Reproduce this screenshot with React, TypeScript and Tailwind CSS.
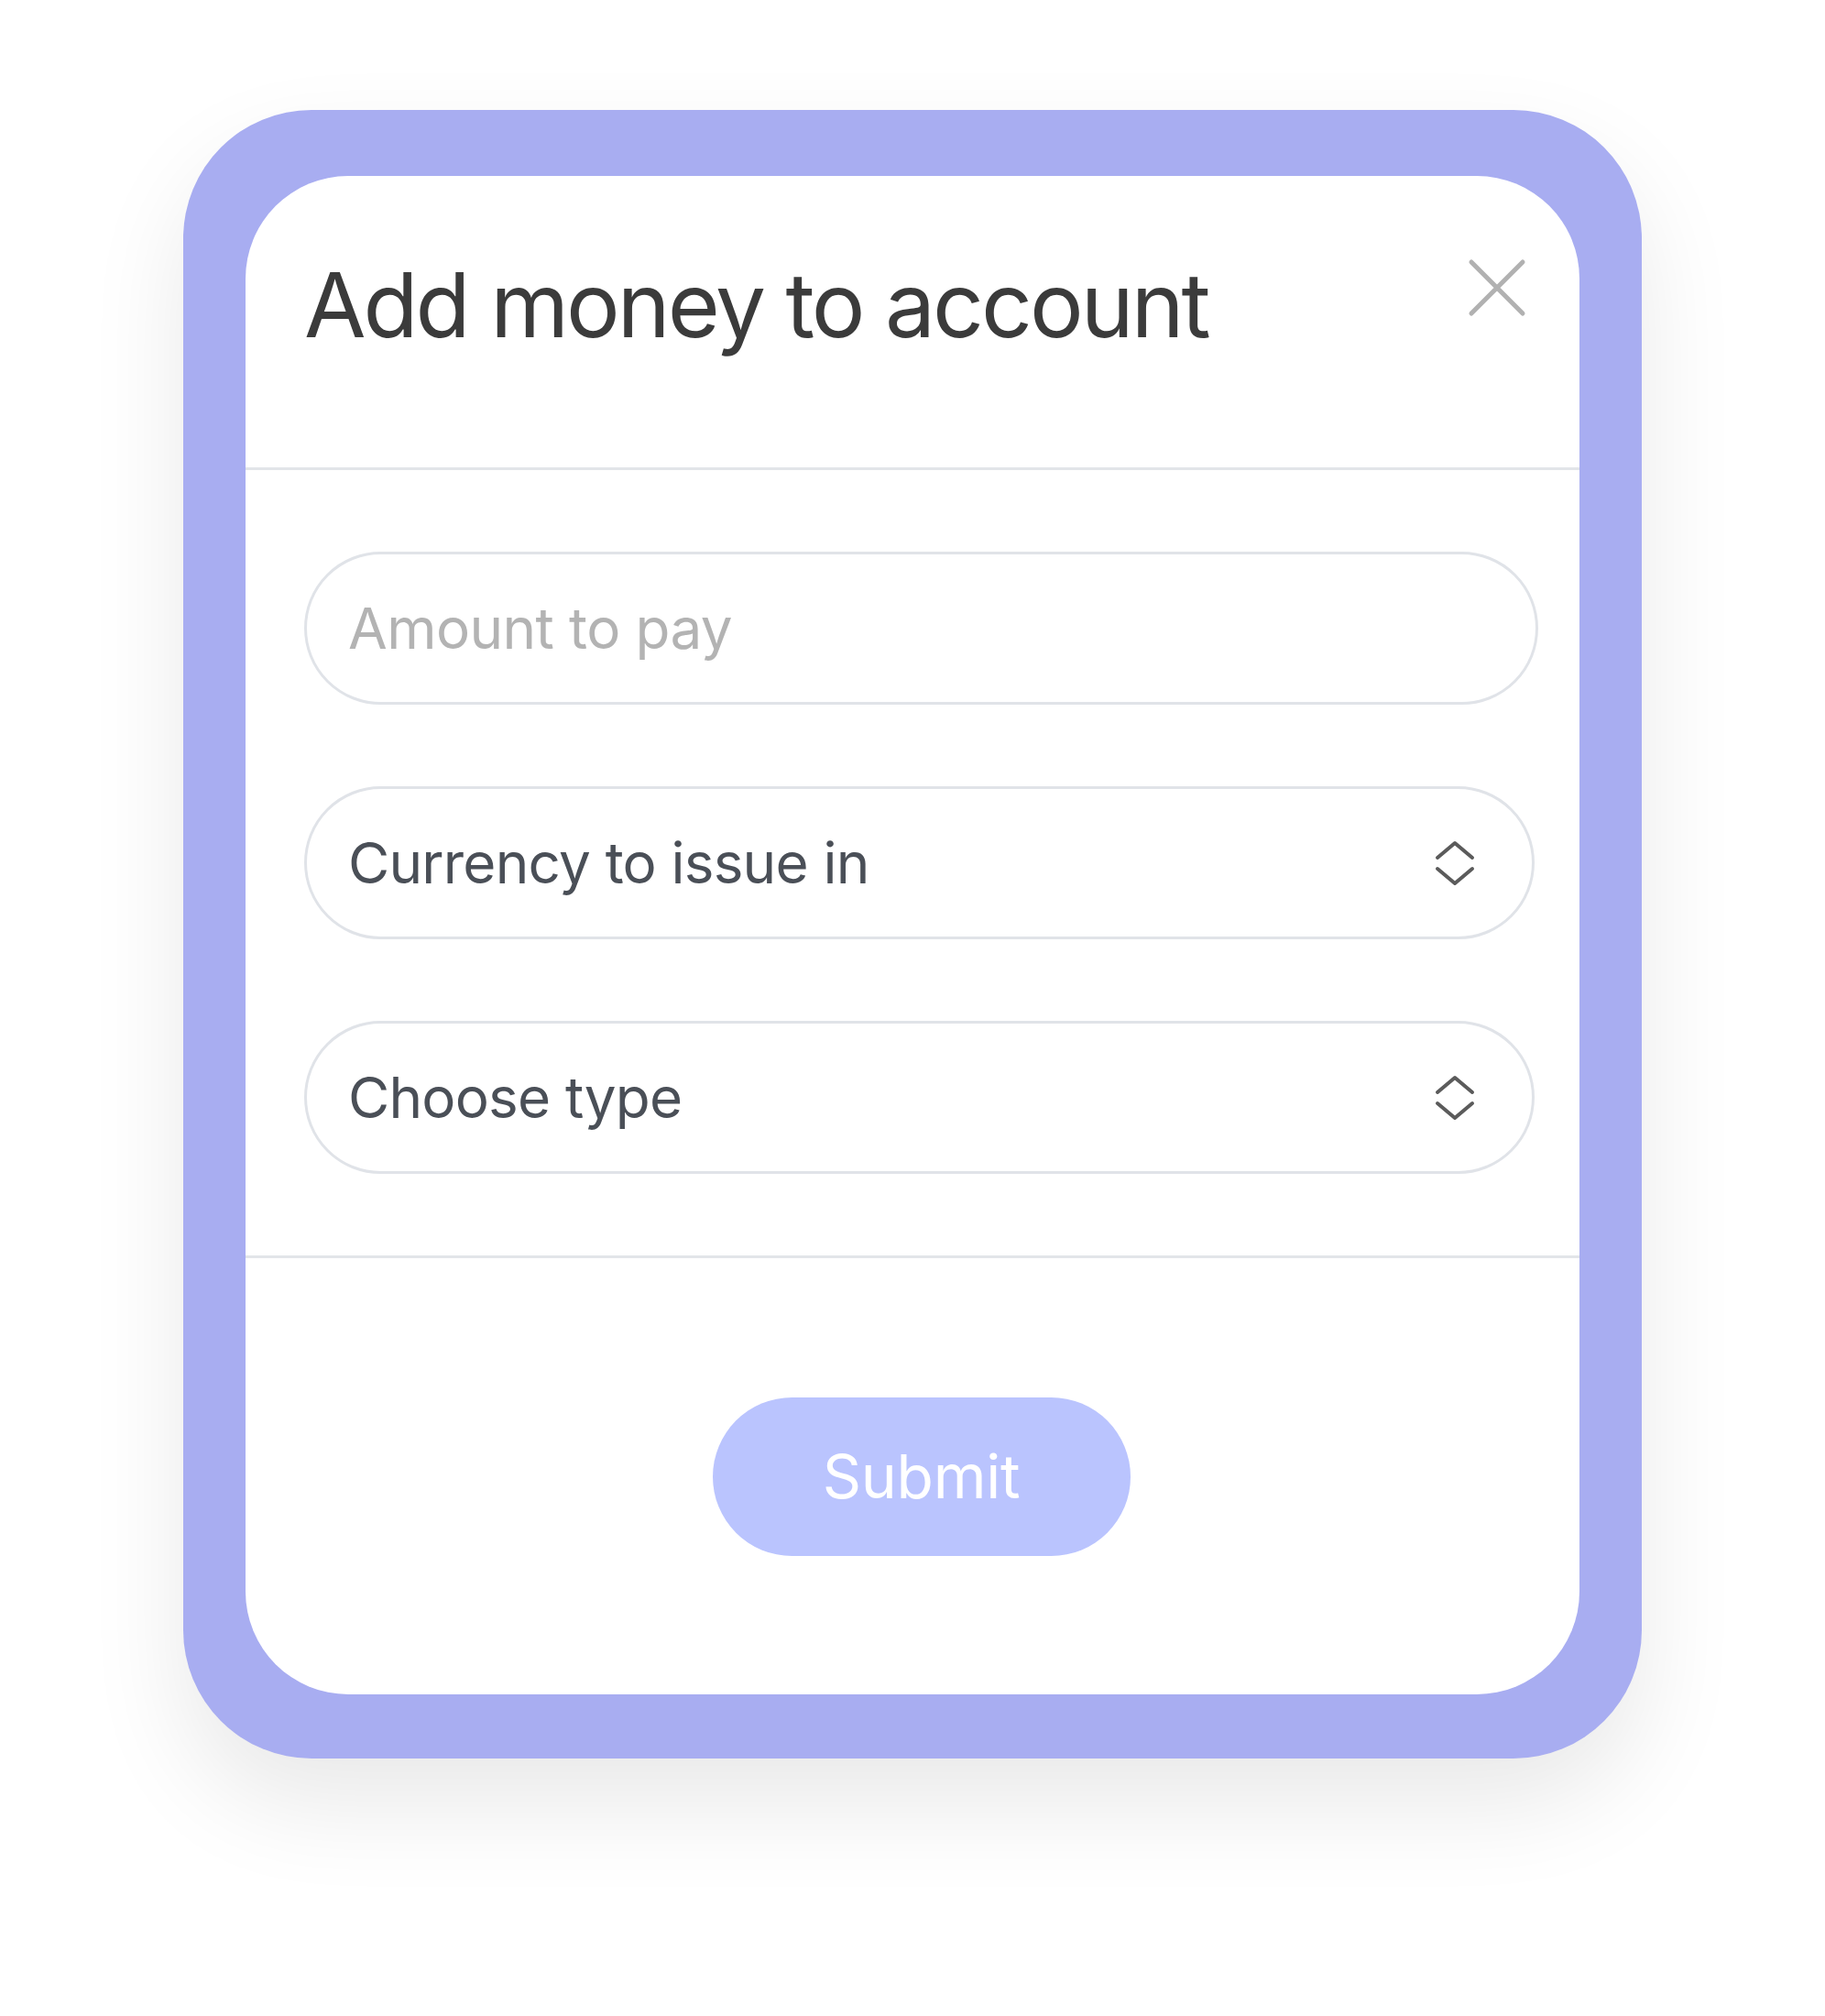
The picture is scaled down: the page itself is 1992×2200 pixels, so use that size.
import React from 'react';

const font = { fontFamily: 'Inter, "Noto Sans", sans-serif' };

const CloseIcon = () => (
  <svg width="64" height="64" viewBox="0 0 64 64" fill="none">
    <path d="M4 4L60 60M60 4L4 60" stroke="#b1b1b1" strokeWidth="5" strokeLinecap="round" />
  </svg>
);

const UpDownIcon = () => (
  <svg width="46" height="50" viewBox="0 0 46 50" fill="none">
    <path d="M4 19L23 3L42 19" stroke="#5b5b5b" strokeWidth="4" strokeLinecap="round" strokeLinejoin="round" />
    <path d="M4 31L23 47L42 31" stroke="#5b5b5b" strokeWidth="4" strokeLinecap="round" strokeLinejoin="round" />
  </svg>
);

const SelectField = ({ label }: { label: string }) => (
  <div className="flex h-[167px] w-[1343px] items-center justify-between rounded-full border-[3px] border-[#e0e3e8] pl-[45px] pr-[61px]">
    <span className="text-[62px] tracking-[-0.8px] text-[#4a4f57]">{label}</span>
    <UpDownIcon />
  </div>
);

export default function App() {
  return (
    <div className="min-h-[2200px] w-[1992px] bg-white pl-[200px] pt-[120px]" style={font}>
      <div className="w-[1592px] rounded-[140px] bg-[#a8adf1] px-[68px] pb-[70px] pt-[72px] shadow-[0_50px_110px_rgba(0,0,0,0.09)]">
        <div className="flex h-[1657px] flex-col rounded-[112px] bg-white">
          {/* header */}
          <div className="flex h-[318px] items-start justify-between pl-[64px] pr-[58px]">
            <h1 className="mt-[82px] text-[98px] leading-[118px] tracking-[-3px] text-[#3b3b3b]">Add money to account</h1>
            <div className="mt-[90px]">
              <CloseIcon />
            </div>
          </div>
          <div className="h-[3px] bg-[#e2e5e9]" />

          {/* fields */}
          <div className="flex flex-col gap-[89px] pl-[64px] pr-[45px] py-[89px]">
            <div className="flex h-[167px] items-center rounded-full border-[3px] border-[#e0e3e8] pl-[45px]">
              <span className="text-[62px] tracking-[-0.6px] text-[#b3b3b3]">Amount to pay</span>
            </div>
            <SelectField label="Currency to issue in" />
            <SelectField label="Choose type" />
          </div>
          <div className="h-[3px] bg-[#e2e5e9]" />

          {/* footer */}
          <div className="flex flex-1 items-center justify-center pl-[64px] pr-[45px]">
            <button className="flex h-[173px] w-[456px] items-center justify-center rounded-full bg-[#bac4fe] text-[66px] tracking-[-0.3px] text-white">
              Submit
            </button>
          </div>
        </div>
      </div>
    </div>
  );
}
